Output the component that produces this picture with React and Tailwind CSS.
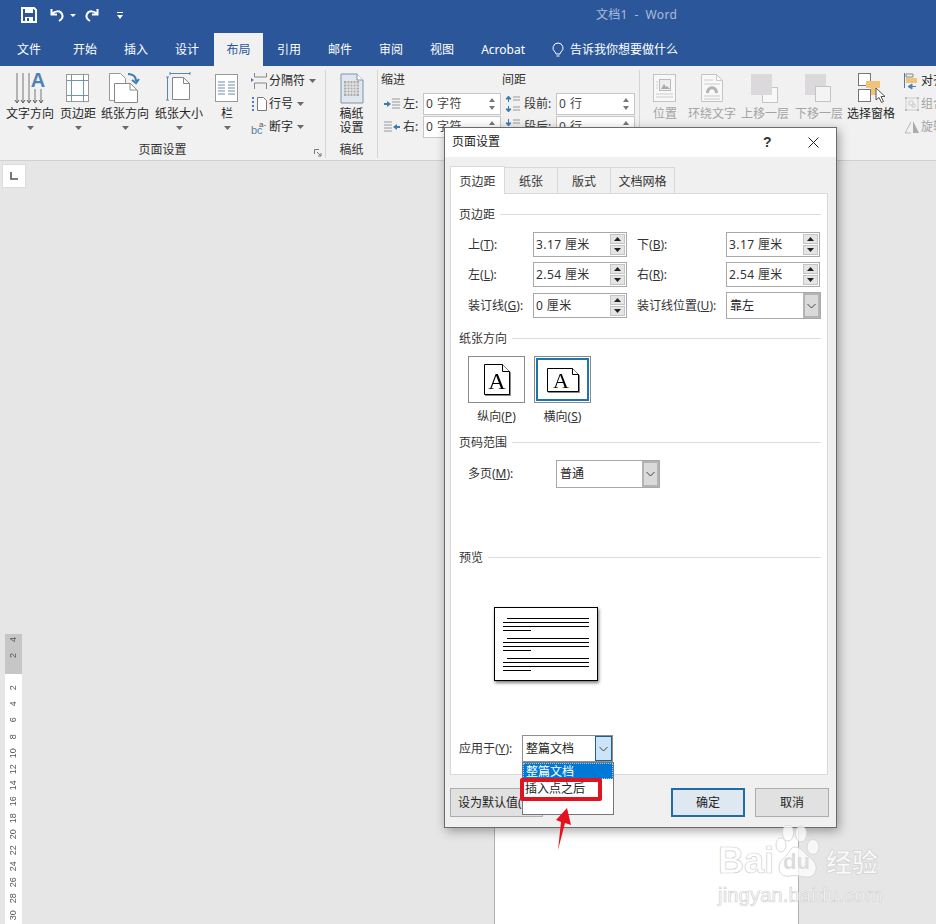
import React from "react";

const rulerNums = [2, 4, 6, 8, 10, 12, 14, 16, 18, 20, 22, 24, 26, 28, 30];
const tabs = [
  ["文件", "ml-[17px]"],
  ["开始", "ml-[32px]"],
  ["插入", "ml-[27px]"],
  ["设计", "ml-[27px]"],
];
const tabsAfter = [
  ["引用", "ml-[14px]"],
  ["邮件", "ml-[27px]"],
  ["审阅", "ml-[27px]"],
  ["视图", "ml-[27px]"],
  ["Acrobat", "ml-[27px]"],
];

function Caret({ className = "" }) {
  return (
    <svg width="7" height="4" viewBox="0 0 7 4" className={className}>
      <path d="M0 0h7L3.500 4z" fill="#6a6a6a" />
    </svg>
  );
}

function Chevron() {
  return (
    <svg width="9" height="6" viewBox="0 0 9 6">
      <path d="M.5 1l4 4 4-4" fill="none" stroke="#444" strokeWidth="1" />
    </svg>
  );
}

function BigButton({ icon, label, width, className = "", gray = false, caret = true }) {
  return (
    <div className={`flex flex-col items-center shrink-0 ${width} ${className}`}>
      <div className="h-[35px] flex items-start">{icon}</div>
      <div className={`leading-[14px] whitespace-nowrap ${gray ? "text-[#a3a3a3]" : "text-[#262626]"}`}>{label}</div>
      {caret && <Caret className="mt-[5px]" />}
    </div>
  );
}

function SmallRow({ icon, label, caret = true, gray = false }) {
  return (
    <div className={`h-[23px] flex items-center whitespace-nowrap ${gray ? "text-[#a3a3a3]" : "text-[#262626]"}`}>
      <div className="w-[18px] h-[18px] shrink-0">{icon}</div>
      <span>{label}</span>
      {caret && <Caret className="ml-[4px]" />}
    </div>
  );
}

function RibbonSpin({ value, width }) {
  return (
    <div className={`h-[22px] bg-white border border-[#c6c6c6] flex items-center justify-between pl-[2px] pr-[5px] text-[#444] ${width}`}>
      <span className="tracking-[0.5px]">{value}</span>
      <div className="flex flex-col gap-[4px]">
        <svg width="6" height="4" viewBox="0 0 6 4"><path d="M0 4h6L3 0z" fill="#777" /></svg>
        <svg width="6" height="4" viewBox="0 0 6 4"><path d="M0 0h6L3 4z" fill="#777" /></svg>
      </div>
    </div>
  );
}

function RibbonGroup({ label, className = "", children, launcher = false }) {
  return (
    <div className={`relative flex flex-col h-[88px] mt-[4px] pt-[2px] shrink-0 border-r border-[#d4d4d4] ${className}`}>
      <div className="flex-1 flex">{children}</div>
      {label && <div className="h-[16px] leading-[16px] text-center text-[#333]">{label}</div>}
      {launcher && (
        <svg width="8" height="8" viewBox="0 0 8 8" className="absolute right-[3px] bottom-[1px]">
          <path d="M.5 5V.5H5M3 3l4 4M7 4v3H4" fill="none" stroke="#777" />
        </svg>
      )}
    </div>
  );
}

function Section({ title, className = "" }) {
  return (
    <div className={`flex items-center h-[16px] pr-[6px] ${className}`}>
      <span className="leading-[16px] translate-y-px text-[#333] whitespace-nowrap">{title}</span>
      <div className="flex-1 h-px bg-[#dcdcdc] ml-[5px]" />
    </div>
  );
}

function Spinner({ value }) {
  return (
    <div className="w-[94px] h-[25px] shrink-0 bg-white border border-[#a9a9a9] flex items-center justify-between pl-[2px] pr-px">
      <span className="text-[#333] tracking-[0.4px]">{value}</span>
      <div className="flex flex-col gap-px">
        <div className="w-[15px] h-[10px] bg-[#e4e4e4] border border-[#c4c4c4] flex items-center justify-center">
          <svg width="7" height="4" viewBox="0 0 7 4"><path d="M0 4h7L3.500 0z" fill="#222" /></svg>
        </div>
        <div className="w-[15px] h-[10px] bg-[#e4e4e4] border border-[#c4c4c4] flex items-center justify-center">
          <svg width="7" height="4" viewBox="0 0 7 4"><path d="M0 0h7L3.500 4z" fill="#222" /></svg>
        </div>
      </div>
    </div>
  );
}

function Select({ value, width, height, active = false }) {
  return (
    <div className={`bg-white border flex items-stretch shrink-0 ${width} ${height} ${active ? "border-[#8f8f8f]" : "border-[#a9a9a9]"}`}>
      <span className="flex-1 pl-[3px] flex items-center text-[#222] whitespace-nowrap">{value}</span>
      <div className={`w-[17px] flex items-center justify-center ${active ? "bg-[#cce4f7] border border-[#1f5f8f]" : "bg-[#dadada] border-2 border-[#b4b4b4]"}`}>
        <Chevron />
      </div>
    </div>
  );
}

function OrientButton({ selected, icon }) {
  return (
    <div className="w-[57px] h-[47px] shrink-0 border border-[#8a8a8a] bg-white p-px">
      <div className={`w-full h-full flex items-center justify-center ${selected ? "border-[2px] border-[#1c75ad]" : ""}`}>{icon}</div>
    </div>
  );
}

function PreviewPara() {
  return (
    <div className="flex flex-col gap-[3px]">
      <div className="h-px bg-black ml-[4px]" />
      <div className="h-px bg-black" />
      <div className="h-px bg-black" />
      <div className="h-px bg-black w-[28px]" />
    </div>
  );
}

function PaperTall() {
  return (
    <svg width="26" height="31" viewBox="0 0 26 31" className="drop-shadow-[1px_1px_0_#888]">
      <path d="M.5.5h18l7 7v23H.5z" fill="#fff" stroke="#000" />
      <path d="M18.500.5v7h7" fill="#fff" stroke="#000" />
      <text x="13" y="25" textAnchor="middle" fontFamily="Liberation Serif" fontSize="24" fill="#000">A</text>
    </svg>
  );
}

function PaperWide() {
  return (
    <svg width="32" height="24" viewBox="0 0 32 24" className="drop-shadow-[1px_1px_0_#888]">
      <path d="M.5.5h25l6 6v17H.5z" fill="#fff" stroke="#000" />
      <path d="M25.500.5v6h6" fill="#fff" stroke="#000" />
      <text x="14" y="20" textAnchor="middle" fontFamily="Liberation Serif" fontSize="22" fill="#000">A</text>
    </svg>
  );
}

function Watermark() {
  const wm = "text-white/80 [-webkit-text-stroke:0.7px_#d2d2d2] font-['Liberation_Sans',sans-serif]";
  return (
    <div className="absolute left-[718px] top-[825px] w-[172px] h-[84px] pointer-events-none">
      <div className="flex items-end h-[54px] whitespace-nowrap">
        <span className={`${wm} w-[57px] shrink-0 text-[36px] leading-[36px] font-bold`}>Bai</span>
        <div className="relative w-[50px] h-[54px] shrink-0">
          <svg width="50" height="54" viewBox="0 0 50 54" className="absolute inset-0">
            <g fill="#ffffff" fillOpacity=".72" stroke="#d8d8d8">
              <ellipse cx="13" cy="8" rx="5.500" ry="8" />
              <ellipse cx="26" cy="9" rx="5.500" ry="8" />
              <ellipse cx="6" cy="20" rx="5" ry="7" />
              <ellipse cx="38" cy="22" rx="6" ry="7.500" />
              <path d="M20 22c5 0 8 4 12 8 5 4 10 8 9 15-1 6-7 8-12 7-5-1-9-2-14-1-6 1-11-2-11-8 0-7 5-10 8-13 3-4 4-8 8-8z" />
            </g>
          </svg>
          <span className="absolute left-[8px] bottom-[6px] text-[22px] leading-[22px] font-bold text-[#dcdcdc] font-['Liberation_Sans',sans-serif]">du</span>
        </div>
        <span className="shrink-0 ml-px text-[26px] leading-[32px] font-bold text-white/80 [-webkit-text-stroke:0.7px_#d2d2d2] mb-[1px]">经验</span>
      </div>
      <div className={`${wm} text-[20px] leading-[24px] tracking-[0.2px] mt-[4px] whitespace-nowrap`}>jingyan.baidu.com</div>
    </div>
  );
}

export default function App() {
  return (
    <div className="relative w-[936px] h-[924px] overflow-hidden bg-[#e6e6e6] text-[12px] font-['Noto_Sans','Noto_Sans_CJK_SC',sans-serif]">
      {/* title bar */}
      <div className="h-[33px] bg-[#2b579a] flex items-center pb-[3px]">
        <svg width="16" height="16" viewBox="0 0 16 16" className="ml-[21px]">
          <path d="M1 1h12l2 2v12H1z" fill="none" stroke="#fff" strokeWidth="2" />
          <path d="M4 1h8v5H4zM4 10h8v5H4z" fill="#fff" />
          <path d="M6 11h2v3H6z" fill="#2b579a" />
        </svg>
        <svg width="16" height="14" viewBox="0 0 16 14" className="ml-[13px]">
          <path d="M1.500 1v5.500H7M2 6c2-3 8-4 10 0 1.500 3-.5 5.500-3 7" fill="none" stroke="#fff" strokeWidth="2" />
        </svg>
        <svg width="6" height="3" viewBox="0 0 6 3" className="ml-[4px]"><path d="M0 0h6L3 3z" fill="#fff" /></svg>
        <svg width="16" height="14" viewBox="0 0 16 14" className="ml-[7px]">
          <path d="M14.500 1v5.500H9M14 6c-2-3-8-4-10 0-1.500 3 .5 5.500 3 7" fill="none" stroke="#fff" strokeWidth="2" />
        </svg>
        <svg width="6" height="7" viewBox="0 0 6 7" className="ml-[18px]">
          <path d="M0 0h6v1H0zM0 3h6L3 7z" fill="#fff" />
        </svg>
        <div className="ml-[473px] text-[#aabdd9] tracking-[0.3px] whitespace-nowrap">文档1&nbsp; -&nbsp; Word</div>
      </div>

      {/* tabs */}
      <div className="h-[33px] bg-[#2b579a] flex items-stretch text-white">
        {tabs.map(([t, m]) => (
          <div key={t} className={`${m} flex items-center leading-[16px]`}>{t}</div>
        ))}
        <div className="ml-[15px] w-[49px] bg-[#f1f1f1] text-[#2b579a] flex items-center justify-center">布局</div>
        {tabsAfter.map(([t, m]) => (
          <div key={t} className={`${m} flex items-center leading-[16px]`}>{t}</div>
        ))}
        <div className="ml-[27px] flex items-center">
          <svg width="12" height="16" viewBox="0 0 12 16">
            <path d="M6 1a5 5 0 0 0-3 9c.7.600 1 1.500 1 2h4c0-.5.300-1.400 1-2A5 5 0 0 0 6 1zM4.500 14h3" fill="none" stroke="#fff" />
          </svg>
          <span className="ml-[6px] whitespace-nowrap">告诉我你想要做什么</span>
        </div>
      </div>

      {/* ribbon */}
      <div className="h-[95px] bg-[#f1f1f1] border-b border-[#d0d0d0] flex">
        <RibbonGroup label="页面设置" className="w-[326px]" launcher>
          <BigButton
            width="w-[48px]"
            className="ml-[6px]"
            label="文字方向"
            icon={
              <svg width="34" height="34" viewBox="0 0 34 34">
                <path d="M4 1v29M10 1v29M16 1v29" stroke="#777" fill="none" />
                <path d="M22 17v13M28 17v13" stroke="#777" fill="none" />
                <path d="M2 28l2 3 2-3M8 28l2 3 2-3M14 28l2 3 2-3M20 28l2 3 2-3M26 28l2 3 2-3" stroke="#555" fill="none" />
                <text x="25" y="15" textAnchor="middle" fontSize="20" fontWeight="700" fontFamily="Liberation Sans" fill="#4f81b8">A</text>
              </svg>
            }
          />
          <BigButton
            width="w-[36px]"
            className="ml-[6px]"
            label="页边距"
            icon={
              <svg width="24" height="30" viewBox="0 0 24 30" className="mt-[2px]">
                <rect x=".5" y=".5" width="22" height="27" fill="#fff" stroke="#999" />
                <path d="M5.500 1v26M17.500 1v26M1 6.500h21M1 21.500h21" stroke="#6e97a8" fill="none" />
              </svg>
            }
          />
          <BigButton
            width="w-[48px]"
            className="ml-[5px]"
            label="纸张方向"
            icon={
              <svg width="32" height="32" viewBox="0 0 32 32">
                <path d="M.5 1.500h11l5 5v22H.5z" fill="#fff" stroke="#999" />
                <path d="M5.500 11.500h16l7 7v12h-23z" fill="#fff" stroke="#888" />
                <path d="M21 11v7h7" fill="none" stroke="#888" />
                <path d="M19 2c4 0 8 2 8 7M23 8l4 3 3-4" fill="none" stroke="#3d7ab0" strokeWidth="2" />
              </svg>
            }
          />
          <BigButton
            width="w-[48px]"
            className="ml-[6px]"
            label="纸张大小"
            icon={
              <svg width="26" height="30" viewBox="0 0 26 30">
                <path d="M4 1.500h20M4 0v3M24 0v3M1.500 5v23M0 5h3M0 28h3" stroke="#5b88a8" fill="none" />
                <path d="M6.500 5.500h11l6 6v16h-17z" fill="#fff" stroke="#888" />
                <path d="M17.500 5.500v6h6" fill="none" stroke="#888" />
              </svg>
            }
          />
          <BigButton
            width="w-[12px]"
            className="ml-[18px]"
            label="栏"
            icon={
              <svg width="24" height="30" viewBox="0 0 24 30" className="mt-[2px]">
                <rect x=".5" y=".5" width="22" height="27" fill="#fff" stroke="#999" />
                <path d="M3 8h7M13 8h7M3 11h7M13 11h7M3 14h7M13 14h7M3 17h7M13 17h7M3 20h7M13 20h7" stroke="#6d8da0" />
              </svg>
            }
          />
          <div className="ml-[18px] -mt-[3px]">
            <SmallRow
              label="分隔符"
              icon={
                <svg width="18" height="18" viewBox="0 0 18 18">
                  <path d="M3.500 1v4M15.500 1v4H3.500M3.500 11h12v6M3.500 11v6" fill="none" stroke="#888" />
                  <path d="M0 6l3 2-3 2z" fill="#4f81b8" />
                </svg>
              }
            />
            <SmallRow
              label="行号"
              icon={
                <svg width="18" height="18" viewBox="0 0 18 18">
                  <path d="M1 3h3M1 7h3M1 11h3M1 15h3" stroke="#4f81b8" strokeWidth="2" strokeDasharray="2 1" />
                  <path d="M6.500 2.500h6l3 3v10h-9z" fill="#fff" stroke="#777" />
                </svg>
              }
            />
            <SmallRow
              label="断字"
              icon={
                <svg width="18" height="18" viewBox="0 0 18 18">
                  <text x="0" y="16" fontSize="11" fontFamily="Liberation Sans" fill="#5b7f9c">bc</text>
                  <text x="8" y="9" fontSize="8" fontFamily="Liberation Sans" fill="#555">a-</text>
                </svg>
              }
            />
          </div>
        </RibbonGroup>

        <RibbonGroup label="稿纸" className="w-[52px]">
          <BigButton
            width="w-full"
            caret={false}
            label={<span className="block text-center">稿纸<br />设置</span>}
            icon={
              <svg width="24" height="31" viewBox="0 0 24 31" className="mt-[1px]">
                <path d="M1 1h16l6 6v23H1z" fill="#dfe6ef" stroke="#7d93ad" />
                <path d="M17 1v6h6" fill="#fff" stroke="#7d93ad" />
                <path d="M4 8h15v15H4z" fill="#aaa" />
                <path d="M4 11h15M4 14h15M4 17h15M4 20h15M7 8v15M10 8v15M13 8v15M16 8v15" stroke="#eee" />
              </svg>
            }
          />
        </RibbonGroup>

        <RibbonGroup className="w-[262px]">
          <div className="w-[124px] shrink-0 pl-[3px]">
            <div className="h-[16px] leading-[16px] text-[#333]">缩进</div>
            <div className="mt-[4px] flex items-center h-[23px]">
              <svg width="16" height="12" viewBox="0 0 16 12" className="ml-[3px]">
                <path d="M8 1h8M8 4h8M8 7h8M8 10h8" stroke="#999" />
                <path d="M0 5h3V3l4 3-4 3V7H0z" fill="#3d7ab0" />
              </svg>
              <span className="ml-[3px] w-[20px] text-[#333]">左:</span>
              <RibbonSpin value="0 字符" width="w-[78px]" />
            </div>
            <div className="flex items-center h-[23px]">
              <svg width="16" height="12" viewBox="0 0 16 12" className="ml-[3px]">
                <path d="M0 1h8M0 4h8M0 7h8M0 10h8" stroke="#999" />
                <path d="M16 5h-3V3L9 6l4 3V7h3z" fill="#3d7ab0" />
              </svg>
              <span className="ml-[3px] w-[20px] text-[#333]">右:</span>
              <RibbonSpin value="0 字符" width="w-[78px]" />
            </div>
          </div>
          <div className="w-[135px] shrink-0">
            <div className="h-[16px] leading-[16px] text-[#333]">间距</div>
            <div className="mt-[4px] flex items-center h-[23px]">
              <svg width="15" height="18" viewBox="0 0 15 18" className="ml-[3px]">
                <path d="M8 2h7M8 5h7M8 12h7M8 15h7" stroke="#999" />
                <path d="M3.500 1L1 4h5zM3.500 17L1 14h5zM3.500 3v4M3.500 11v4" fill="#3d7ab0" stroke="#3d7ab0" />
              </svg>
              <span className="ml-[4px] w-[32px] text-[#333] whitespace-nowrap">段前:</span>
              <RibbonSpin value="0 行" width="w-[79px]" />
            </div>
            <div className="flex items-center h-[23px]">
              <svg width="15" height="18" viewBox="0 0 15 18" className="ml-[3px]">
                <path d="M8 2h7M8 5h7" stroke="#999" />
                <path d="M3.500 8L1 5h5zM3.500 1v4" fill="#3d7ab0" stroke="#3d7ab0" />
              </svg>
              <span className="ml-[4px] w-[32px] text-[#333] whitespace-nowrap">段后:</span>
              <RibbonSpin value="0 行" width="w-[79px]" />
            </div>
          </div>
        </RibbonGroup>

        <RibbonGroup className="flex-1 border-r-0">
          <BigButton
            width="w-[24px]"
            className="ml-[13px]"
            gray
            caret={false}
            label="位置"
            icon={
              <svg width="24" height="30" viewBox="0 0 24 30" className="mt-[2px]">
                <rect x=".5" y=".5" width="22" height="27" fill="#f8f8f8" stroke="#c4c4c4" />
                <rect x="6.500" y="5.500" width="11" height="11" fill="#eee" stroke="#bbb" />
                <path d="M8 15l3-5 2 3 1-1 3 3z" fill="#aaa" />
                <path d="M3 8h2M3 11h2M3 14h2M3 20h17M3 23h17" stroke="#ccc" />
              </svg>
            }
          />
          <BigButton
            width="w-[48px]"
            className="ml-[11px]"
            gray
            caret={false}
            label="环绕文字"
            icon={
              <svg width="22" height="30" viewBox="0 0 22 30" className="mt-[2px]">
                <path d="M.5.5h15l6 6v21H.5z" fill="#f8f8f8" stroke="#c4c4c4" />
                <path d="M15.500.5v6h6M3 6h9M3 10h16M3 22h16M3 25h16" fill="none" stroke="#ccc" />
                <path d="M5 19c0-9 12-9 12 0h-3c0-5-6-5-6 0z" fill="#b5b5b5" />
              </svg>
            }
          />
          <BigButton
            width="w-[48px]"
            className="ml-[5px]"
            gray
            caret={false}
            label="上移一层"
            icon={
              <svg width="28" height="30" viewBox="0 0 28 30" className="mt-[2px]">
                <rect x="11.500" y="13.500" width="15" height="15" fill="#f8f8f8" stroke="#c4c4c4" />
                <rect x="0" y="0" width="21" height="21" fill="#dcd9dc" />
              </svg>
            }
          />
          <BigButton
            width="w-[48px]"
            className="ml-[6px]"
            gray
            caret={false}
            label="下移一层"
            icon={
              <svg width="28" height="30" viewBox="0 0 28 30" className="mt-[2px]">
                <rect x="0" y="0" width="21" height="21" fill="#dcd9dc" />
                <rect x="10.500" y="12.500" width="15" height="15" fill="#f4f4f4" stroke="#c4c4c4" />
              </svg>
            }
          />
          <BigButton
            width="w-[48px]"
            className="ml-[4px]"
            caret={false}
            label="选择窗格"
            icon={
              <svg width="30" height="32" viewBox="0 0 30 32" className="mt-px">
                <rect x="2.500" y=".5" width="12" height="12" fill="#fff" stroke="#777" />
                <rect x="2.500" y="16.500" width="12" height="12" fill="#fff" stroke="#777" />
                <path d="M10 8h14v7h-4v7h-5v-7h-5z" fill="#f0c478" />
                <path d="M20 15v12l3-2.500 2.500 5 2-1-2.500-5h4z" fill="#fff" stroke="#555" />
              </svg>
            }
          />
          <div className="ml-[8px] -mt-[3px]">
            <SmallRow
              caret={false}
              label="对齐"
              icon={
                <svg width="18" height="18" viewBox="0 0 18 18">
                  <path d="M1.500 1v15" stroke="#4f7ca5" />
                  <path d="M3 2h7v3H3z" fill="none" stroke="#888" />
                  <path d="M3 6h11v5H3z" fill="#f0c478" />
                  <path d="M9 12l-4 2.500L9 17zM5 14.500h8" fill="#4f81b8" stroke="#4f81b8" />
                </svg>
              }
            />
            <SmallRow
              gray
              caret={false}
              label="组合"
              icon={
                <svg width="18" height="18" viewBox="0 0 18 18">
                  <path d="M2 2h2v2H2zM14 2h2v2h-2zM2 14h2v2H2zM14 14h2v2h-2z" fill="#bbb" />
                  <path d="M4 3h10M4 15h10M3 4v10M15 4v10M6 6h4v4H6zM9 9h3v3H9z" fill="none" stroke="#ccc" />
                </svg>
              }
            />
            <SmallRow
              gray
              caret={false}
              label="旋转"
              icon={
                <svg width="18" height="18" viewBox="0 0 18 18">
                  <path d="M10 3l6 12h-6z" fill="#aaa" />
                  <path d="M8 4L2 15h6" fill="none" stroke="#bbb" />
                </svg>
              }
            />
          </div>
        </RibbonGroup>
      </div>

      {/* document area */}
      <div className="flex h-[763px]">
        <div className="w-[27px] shrink-0 flex flex-col">
          <div className="mt-[3px] ml-[2px] w-[24px] h-[24px] bg-white border border-[#dcdcdc] flex items-center justify-center">
            <svg width="8" height="8" viewBox="0 0 8 8"><path d="M1 0v7h7" fill="none" stroke="#555" strokeWidth="1.600" /></svg>
          </div>
          <div className="mt-auto ml-[5px] w-[17px] h-[290px] overflow-hidden text-[9px] leading-[9px] text-[#555] font-['Liberation_Sans',sans-serif] flex flex-col">
            <div className="h-[40px] shrink-0 bg-[#c6c6c6] flex flex-col items-center gap-[6px]">
              <div className="h-[10px] flex items-center [writing-mode:vertical-rl] rotate-180 justify-center">4</div>
              <div className="h-[10px] flex items-center [writing-mode:vertical-rl] rotate-180 justify-center">2</div>
            </div>
            <div className="flex-1 bg-white flex flex-col items-center pt-[6px]">
              {rulerNums.map((n) => (
                <div key={n} className="h-[16.200px] shrink-0 flex items-center justify-center [writing-mode:vertical-rl] rotate-180">{n}</div>
              ))}
            </div>
          </div>
        </div>
        <div className="ml-[467px] w-[305px] bg-white border-x border-[#b0b0b0]" />
      </div>

      {/* dialog */}
      <div className="absolute left-[444px] top-[127px] w-[393px] h-[701px] bg-[#f0f0f0] border border-[#6b6b6b] shadow-[2px_3px_10px_rgba(0,0,0,0.35)] flex flex-col">
        <div className="h-[29px] bg-white flex items-center shrink-0 text-[#222]">
          <span className="ml-[7px] text-[12px] -translate-y-px">页面设置</span>
          <span className="ml-[263px] text-[14px] font-bold font-['Liberation_Sans',sans-serif] text-[#333]">?</span>
          <svg width="11" height="11" viewBox="0 0 11 11" className="ml-[36px]">
            <path d="M.5.500l10 10M10.500.500l-10 10" stroke="#222" />
          </svg>
        </div>
        <div className="relative flex-1 pl-[5px] pt-[8px]">
          <div className="flex items-end h-[28px] text-[#333]">
            <div className="w-[55px] h-[28px] pt-[2px] bg-white border border-b-0 border-[#d9d9d9] relative z-10 -mb-px flex items-center justify-center">页边距</div>
            <div className="w-[53px] h-[26px] pt-[2px] bg-[#f0f0f0] border border-l-0 border-b-0 border-[#d9d9d9] flex items-center justify-center">纸张</div>
            <div className="w-[53px] h-[26px] pt-[2px] bg-[#f0f0f0] border border-l-0 border-b-0 border-[#d9d9d9] flex items-center justify-center">版式</div>
            <div className="w-[64px] h-[26px] pt-[2px] bg-[#f0f0f0] border border-l-0 border-b-0 border-[#d9d9d9] flex items-center justify-center">文档网格</div>
          </div>

          <div className="relative w-[378px] h-[582px] bg-white border border-[#d9d9d9] pl-[8px] pt-[12px] text-[#333]">
            <Section title="页边距" />
            <div className="mt-[10px] pl-[9px] flex flex-col">
              {[
                ["上", "T", "3.17 厘米", "下", "B", "3.17 厘米"],
                ["左", "L", "2.54 厘米", "右", "R", "2.54 厘米"],
              ].map(([a, ak, av, b, bk, bv]) => (
                <div key={a} className="flex items-center h-[25px] mb-[5px]">
                  <span className="w-[65px] whitespace-nowrap">{a}(<u>{ak}</u>):</span>
                  <Spinner value={av} />
                  <span className="ml-[10px] w-[89px] whitespace-nowrap">{b}(<u>{bk}</u>):</span>
                  <Spinner value={bv} />
                </div>
              ))}
              <div className="flex items-center h-[25px] mt-px">
                <span className="w-[65px] whitespace-nowrap">装订线(<u>G</u>):</span>
                <Spinner value="0 厘米" />
                <span className="ml-[10px] w-[89px] whitespace-nowrap">装订线位置(<u>U</u>):</span>
                <Select value="靠左" width="w-[95px]" height="h-[27px]" />
              </div>
            </div>

            <Section title="纸张方向" className="mt-[12px]" />
            <div className="mt-[10px] pl-[9px] flex gap-[9px]">
              <OrientButton icon={<PaperTall />} />
              <OrientButton selected icon={<PaperWide />} />
            </div>
            <div className="mt-[6px] pl-[9px] flex gap-[9px] leading-[16px]">
              <div className="w-[57px] text-center whitespace-nowrap">纵向(<u>P</u>)</div>
              <div className="w-[57px] text-center whitespace-nowrap">横向(<u>S</u>)</div>
            </div>

            <Section title="页码范围" className="mt-[9px]" />
            <div className="mt-[10px] pl-[9px] flex items-center">
              <span className="w-[88px] whitespace-nowrap">多页(<u>M</u>):</span>
              <Select value="普通" width="w-[104px]" height="h-[28px]" />
            </div>

            <Section title="预览" className="mt-[61px]" />
            <div className="mt-[42px] ml-[35px] w-[104px] h-[74px] border border-black bg-white shadow-[1px_2px_3px_rgba(0,0,0,0.5)] pl-[8px] pr-[8px] pt-[10px] flex flex-col gap-[7px]">
              <PreviewPara />
              <PreviewPara />
              <PreviewPara />
            </div>

            <div className="mt-[54px] flex items-center">
              <span className="w-[63px] whitespace-nowrap">应用于(<u>Y</u>):</span>
              <Select value="整篇文档" width="w-[91px]" height="h-[27px]" active />
            </div>

            {/* open dropdown */}
            <div className="absolute left-[71px] top-[568px] z-20 w-[92px] h-[53px] bg-white border border-[#767676]">
              <div className="h-[16px] leading-[16px] pl-[2px] bg-[#0078d7] text-white border border-dotted border-[#9ec9ec]">整篇文档</div>
              <div className="relative h-[18px] leading-[18px] pl-[2px] mt-[1px] text-[#222]">插入点之后</div>
            </div>
            <div className="absolute left-[69px] top-[584px] z-30 w-[82px] h-[23px] border-[4px] border-[#e0131f] rounded-[2px]" />
          </div>

          <div className="mt-[13px] flex text-[#222]">
            <div className="w-[93px] h-[29px] bg-[#e1e1e1] border border-[#adadad] pl-[7px] flex items-center overflow-hidden whitespace-nowrap">设为默认值(D)...</div>
            <div className="ml-[128px] w-[74px] h-[29px] bg-[#dfe8f0] border-2 border-[#1c6ea4] flex items-center justify-center">确定</div>
            <div className="ml-[10px] w-[74px] h-[29px] bg-[#e1e1e1] border border-[#adadad] flex items-center justify-center">取消</div>
          </div>
        </div>
      </div>

      {/* annotation arrow */}
      <svg width="20" height="44" viewBox="0 0 20 44" className="absolute left-[554px] top-[807px] z-30">
        <path d="M13 1l4 17-6-2-7 27 3-28-5-2z" fill="#e5121e" />
      </svg>

      <Watermark />
    </div>
  );
}
